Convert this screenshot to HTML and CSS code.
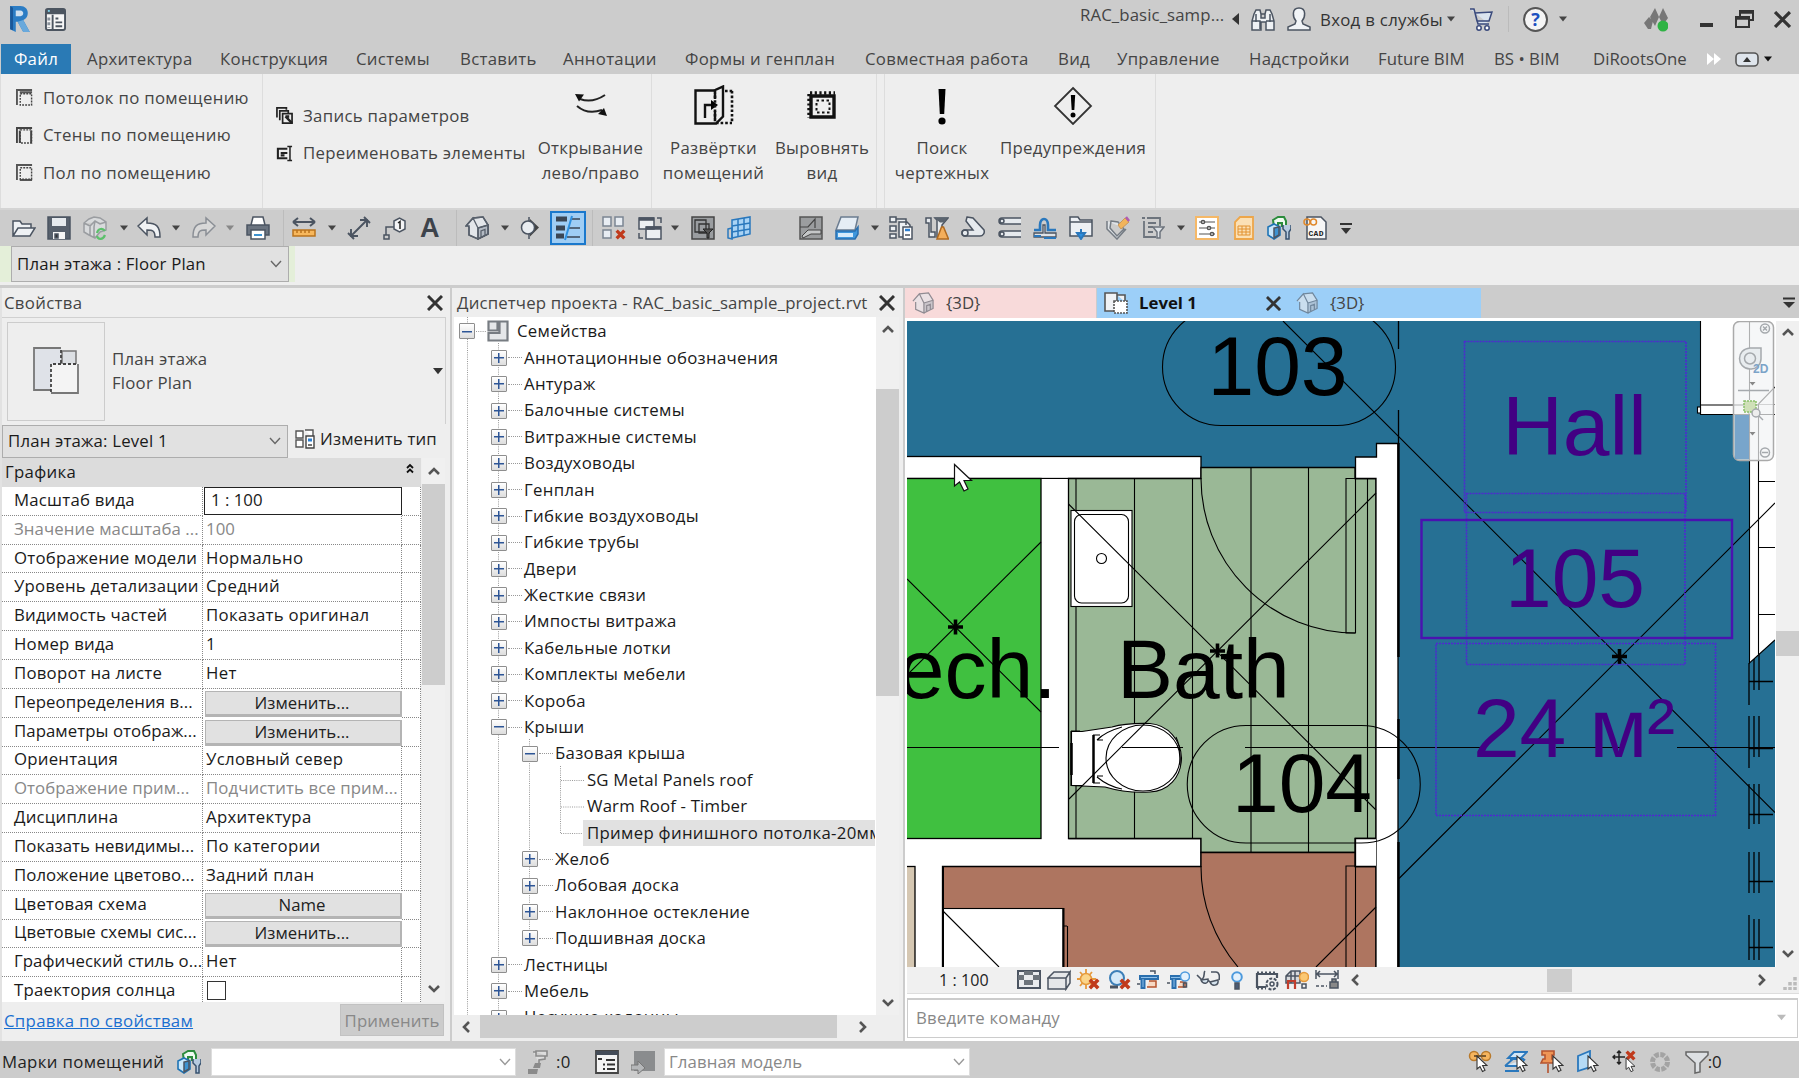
FILE: index.html
```html
<!DOCTYPE html>
<html lang="ru">
<head>
<meta charset="utf-8">
<title>RAC_basic_sample_project.rvt</title>
<link rel="stylesheet" href="styles.css">
</head>
<body>
<svg class="defs" aria-hidden="true">
  <symbol id="caret" viewBox="0 0 8 8"><path d="M0 1.5h8L4 6.5z" fill="currentColor"/></symbol>
  <symbol id="close" viewBox="0 0 16 16"><path d="M1 1l14 14M15 1L1 15" fill="none" stroke="#333" stroke-width="3"/></symbol>
  <symbol id="chev" viewBox="0 0 12 8"><path d="M1 1l5 5.5L11 1" fill="none" stroke="currentColor" stroke-width="1.4"/></symbol>
  <symbol id="arr" viewBox="0 0 12 8"><path d="M1 7l5-5 5 5" fill="none" stroke="#555" stroke-width="2.6"/></symbol>
  <symbol id="house" viewBox="0 0 24 24"><path d="M1 10L8 2l10-1 5 8v9l-10 5-9-4v-9z" fill="#e3e6ea"/><path d="M13 12l10-3v9l-10 5z" fill="#b3bac3"/><path d="M4 11v8l9 4V12M1 10l7-8 5 10M8 2l10-1 5 8-10 3M23 9v9l-10 5M16 21v-6l4-1.500v6" fill="none" stroke="#59616c" stroke-width="1.300"/></symbol>
  <symbol id="ptr" viewBox="0 0 12 18"><path d="M1 1v13l3-2.500 2.500 5 2.500-1.200L6.600 10.500H11z" fill="#fff" stroke="#333" stroke-width="1.100"/></symbol>
  <symbol id="redx" viewBox="0 0 10 10"><path d="M1.500 1.500l7 7M8.500 1.500l-7 7" stroke="#c03a1c" stroke-width="3" fill="none"/></symbol>
  <symbol id="cubes" viewBox="0 0 24 24"><path d="M6 4l5-3h6l2 4v5h-4V7h-4v4H7z" fill="#eefaf0" stroke="#2b8c3c" stroke-width="2"/><path d="M1 11l6-3 6 3v8l-6 4-6-4z" fill="#c9e7fa" stroke="#1f74b5" stroke-width="1.600"/><path d="M7 12v10l5-3v-8z" fill="#3d93d1"/><path d="M16 9v4l3 3v7h3v-7l2-3V9" fill="#b6cbe0" stroke="#37526f" stroke-width="1.500"/></symbol>
</svg>

<header class="titlebar">
  <svg class="logo" viewBox="0 0 22 30"><path d="M1 1h11c10 0 10 13 3 15l7 13h-7L9 18H7v11l-6-3z" fill="#2b7cc4"/><path d="M1 1l3 2v24l-3-1z" fill="#1a5798"/><path d="M7 6h5c4 0 4 6 0 6H7z" fill="#cfe0f0"/><path d="M9 18l6 11h7l-7-13z" fill="#69a9dc"/></svg>
  <svg class="panelico" viewBox="0 0 22 24"><rect x="1" y="1" width="20" height="22" rx="2" fill="#f7f7f7" stroke="#4c5560" stroke-width="2"/><path d="M1 4h20" stroke="#4c5560" stroke-width="5"/><path d="M4 10v11" stroke="#8a929b" stroke-width="3" stroke-dasharray="3 2"/><path d="M8 7v15M11 11h3M11 15h7M11 19h7" stroke="#4c5560" stroke-width="2" fill="none"/><path d="M3 3h2" stroke="#7fd0e8" stroke-width="2"/></svg>
  <span class="doc">RAC_basic_samp...</span>
  <svg class="backtri" viewBox="0 0 7 12"><path d="M7 0v12L0 6z" fill="#333"/></svg>
  <svg class="ic bino" viewBox="0 0 24 24"><path d="M3 6l2-4h4l1 4v4h4V6l1-4h4l2 4 2 7v9h-8v-8h-5v8H1v-9zM1 13h8v8M23 13h-8M10 6h4M5 6v8M19 6v8" fill="#eef1f4"/></svg>
  <svg class="ic user" viewBox="0 0 24 24"><path d="M12 1c-8 0-6 10-3 13l-1 3-7 3v3h22v-3l-7-3-1-3c3-3 5-13-3-13z" fill="#f1f4f7"/></svg>
  <span class="login">Вход в службы</span>
  <svg class="caret c1"><use href="#caret"/></svg>
  <svg class="ic cart" viewBox="0 0 24 24"><path d="M1 1h4l4 15h11M6 5l17-1-3 9H8z" fill="#dbe4ef" stroke="#3a4a7c"/><circle cx="10" cy="20" r="2.200" fill="#fff" stroke="#3a4a7c"/><circle cx="18" cy="20" r="2.200" fill="#fff" stroke="#3a4a7c"/></svg>
  <i class="vsep"></i>
  <span class="help">?</span>
  <svg class="caret c2"><use href="#caret"/></svg>
  <svg class="mount" viewBox="0 0 24 24"><path d="M5 9l4 4-2 8H4l-4-6zM11 0l4 9-4 9-5-9zM19 0l5 10-5 7-4-8z" fill="#777"/><circle cx="19" cy="18" r="5.500" fill="#2fb344"/></svg>
  <svg class="wbtn wmin" viewBox="0 0 13 20"><path d="M0 16h13" stroke="#333" stroke-width="4"/></svg>
  <svg class="wbtn wres" viewBox="0 0 19 20"><path d="M5 7V2h13v9h-4M1 18V8h13v10z" fill="none" stroke="#333" stroke-width="2"/><path d="M4 3h15M0 9h15" stroke="#333" stroke-width="3.500"/></svg>
  <svg class="wbtn wx"><use href="#close"/></svg>
</header>

<nav class="tabs">
  <a class="file">Файл</a><a>Архитектура</a><a>Конструкция</a><a>Системы</a><a>Вставить</a><a>Аннотации</a><a>Формы и генплан</a><a>Совместная работа</a><a>Вид</a><a>Управление</a><a>Надстройки</a><a class="lat">Future BIM</a><a class="lat">BS • BIM</a><a class="lat">DiRootsOne</a>
  <svg class="more" viewBox="0 0 14 14"><path d="M0 1l7 6-7 6zM7 1l7 6-7 6z" fill="#fff"/></svg>
  <svg class="collapse" viewBox="0 0 24 15"><rect x="1" y="1" width="22" height="13" rx="4" fill="#dfe5ec" stroke="#555" stroke-width="1.600"/><path d="M8 10h8l-4-5z" fill="#333"/></svg>
  <svg class="caret dark"><use href="#caret"/></svg>
</nav>

<section class="ribbon">
  <div class="rgroup g1">
    <div class="small"><svg class="sq" viewBox="0 0 18 18"><path d="M1 17V1h16M4 3.500h13" fill="none" stroke="#555" stroke-width="2"/><rect x="4.500" y="5" width="12" height="12" fill="none" stroke="#444" stroke-width="1.500" stroke-dasharray="2 1.200"/></svg>Потолок по помещению</div>
    <div class="small"><svg class="sq" viewBox="0 0 18 18"><path d="M1 17V1h16M4 17V4M16 4v13" fill="none" stroke="#444" stroke-width="2"/><rect x="4.500" y="3" width="12" height="14" fill="none" stroke="#444" stroke-width="1.500" stroke-dasharray="2 1.200"/></svg>Стены по помещению</div>
    <div class="small"><svg class="sq" viewBox="0 0 18 18"><path d="M1 17V1h16M4 17h13" fill="none" stroke="#555" stroke-width="2"/><rect x="4.500" y="4" width="12" height="12" fill="none" stroke="#444" stroke-width="1.500" stroke-dasharray="2 1.200"/></svg>Пол по помещению</div>
  </div>
  <div class="rgroup g2">
    <div class="small"><svg class="sq" viewBox="0 0 18 18"><path d="M1 11V1h10v2M4 14V4h9v2M7 17V7h10v10z" fill="none" stroke="#222" stroke-width="1.800"/><path d="M10 10l7 7M10 10h4" stroke="#222" stroke-width="2.500"/></svg>Запись параметров</div>
    <div class="small"><svg class="sq" viewBox="0 0 18 18"><path d="M12 4H2v10h10M5 8.500h7M5 11h4" fill="none" stroke="#222" stroke-width="2.200"/><path d="M12 1.500h5M14.800 1v16M12 16.500h5" fill="none" stroke="#222" stroke-width="1.600"/></svg>Переименовать элементы</div>
  </div>
  <div class="big b1"><svg viewBox="0 0 40 40"><path d="M9 14c8 3 16 2 25-4M6 21c8 7 16 7 25 4" fill="none" stroke="#222" stroke-width="2"/><path d="M4 9l9 .500-5 7zM36 31l-9-2 6-6z" fill="#111"/></svg><span>Открывание<br>лево/право</span></div>
  <div class="big b2"><svg viewBox="0 0 40 40"><path d="M1.500 5.500H20l9-4v30l-7 7H1.500zM21 8v6M21 26v8M11 33V20h8" fill="none" stroke="#111" stroke-width="2.400"/><path d="M17 15l7 5-7 5z"/><path d="M31 6h8M38 6v32M21 6v32M22 38h16" fill="none" stroke="#111" stroke-width="2.600" stroke-dasharray="2.600 2"/></svg><span>Развёртки<br>помещений</span></div>
  <div class="big b3"><svg viewBox="0 0 40 40"><path d="M9 11h23v21H9z" fill="none" stroke="#111" stroke-width="3.400"/><path d="M8 8h25M7 9v24" stroke="#111" stroke-width="3.400" fill="none" stroke-dasharray="2.200 2.500"/><path d="M14.500 15.500h13v12h-13z" fill="none" stroke="#111" stroke-width="2" stroke-dasharray="2.500 2.500"/></svg><span>Выровнять<br>вид</span></div>
  <i class="rs"></i>
  <div class="big b4"><svg viewBox="0 0 40 40"><path d="M16.500 4h7l-1.300 25h-4.400z"/><circle cx="20" cy="36" r="3.600"/></svg><span>Поиск<br>чертежных</span></div>
  <div class="big b5"><svg viewBox="0 0 40 40"><path d="M20 3l18 18-18 18L2 21z" fill="none" stroke="#333" stroke-width="1.800"/><path d="M17.800 10h4.400l-.900 15h-2.600z"/><circle cx="20" cy="30" r="2.500"/></svg><span>Предупреждения</span></div>
</section>

<div class="qat">
  <svg class="ic" viewBox="0 0 24 24"><path d="M1 20V5h7l2 3h9v4M1 20l5-8h17l-5 8z" fill="#eef1f4"/></svg>
  <svg class="ic" viewBox="0 0 24 24"><path d="M1 1h22v22H1z" fill="#57606c"/><path d="M5 2h14v8H5z" fill="#e6eaee" stroke="none"/><path d="M6 16h12v7H6z" fill="#f5f5f5" stroke="none"/><path d="M8 18h3v4H8z" fill="#333"/></svg>
  <svg class="ic" viewBox="0 0 24 24"><path d="M1 7l5-4 5-2 6 1 6 4v8l-6 2-5 6-6-3-5-3zM1 7l6 3 5-5 5 3 6-2M7 10v10M12 5l-1 6v10" fill="#d8dadc" stroke="#9a9da1"/><path d="M14 17c1-5 6-5 8-2M22 19c-2 5-7 5-8 1" stroke="#5cc06c" stroke-width="2.200"/></svg>
  <svg class="caret"><use href="#caret"/></svg>
  <svg class="ic" viewBox="0 0 24 24"><path d="M1 10l9-8v5c9 0 13 3 13 14h-5c0-6-2-7-8-7v5z" fill="#f0f2f4"/></svg>
  <svg class="caret"><use href="#caret"/></svg>
  <svg class="ic dim" viewBox="0 0 24 24"><path d="M23 10l-9-8v5C5 7 1 10 1 21h5c0-6 2-7 8-7v5z" fill="#e4e4e4"/></svg>
  <svg class="caret dim"><use href="#caret"/></svg>
  <svg class="ic" viewBox="0 0 24 24"><path d="M5 9l2-8h10l2 8" fill="#fff"/><path d="M1 9h22v10H1z" fill="#6b7480"/><path d="M5 14h14v9H5z" fill="#fff"/><path d="M8 19h8" stroke="#3d93d1" stroke-width="2"/></svg>
  <i class="vs"></i>
  <svg class="ic" viewBox="0 0 24 24"><path d="M1 6h22M1 6l5-4M1 6l5 4M23 6l-5-4M23 6l-5 4" stroke-width="2"/><path d="M1 14h22v6H1z" fill="#f7b75c" stroke="#b9731d"/><path d="M5 14v3M9 14v3M13 14v3M17 14v3" stroke="#b9731d"/></svg>
  <svg class="caret"><use href="#caret"/></svg>
  <svg class="ic" viewBox="0 0 24 24"><path d="M5 19L19 5M4 13v7h7M13 4h7v7M17 1l6 6M1 17l6 6" stroke-width="1.900"/></svg>
  <svg class="ic" viewBox="0 0 24 24"><path d="M3 19v-8h8M1 19h5v4H1z"/><path d="M11 5l5.500-3L22 5v8l-5.500 3L11 13z" fill="#f3f4f6"/><path d="M15 7l2-1.500V13" stroke="#222"/></svg>
  <b class="letter">A</b>
  <i class="vs"></i>
  <svg class="ic"><use href="#house"/></svg>
  <svg class="caret"><use href="#caret"/></svg>
  <svg class="ic" viewBox="0 0 24 24"><path d="M12 3l9 8.500-9 9z" fill="#444" stroke="none"/><path d="M11 1v4M11 18v5"/><circle cx="10" cy="11.500" r="6.500" fill="#e9edf1"/></svg>
  <span class="active"><svg class="ic" viewBox="0 0 26 26"><path d="M1 4h11M1 13h9M1 21h8" stroke="#3b4654" stroke-width="5"/><path d="M16 4h9M14 13h11M12 22h13" stroke="#3b4654"/><path d="M17 1l-7 24" stroke="#2d90e0" stroke-width="2"/></svg></span>
  <i class="vs"></i>
  <svg class="ic" viewBox="0 0 24 24"><path d="M1 1h8v9H1zM13 1h8v9h-8zM1 14h8v8H1z" fill="#e8edf3" stroke="#7b8592"/><use href="#redx" x="13" y="13" width="11" height="11"/></svg>
  <svg class="ic" viewBox="0 0 24 24"><path d="M1 2h15v11H1zM8 11h15v12H8z" fill="#eceff2"/><path d="M1 3h15M8 12h15" stroke-width="3.500"/><path d="M19 2h4v5M1 17v5h4"/></svg>
  <svg class="caret"><use href="#caret"/></svg>
  <svg class="ic" viewBox="0 0 24 24"><path d="M1 1h22v22H1z" fill="#9a9da0" stroke="#444"/><path d="M4 4h11v12H4zM8 8h10v9H8z" stroke="#333" stroke-width="1.300"/><path d="M12 13h10l-4 4v5h-2v-5z" fill="#555" stroke="#222" stroke-width="1"/></svg>
  <svg class="ic" viewBox="0 0 24 24"><path d="M5 4l18-3v17L5 22z" fill="#a9d3f5" stroke="#2a78bd"/><path d="M1 13l4-1v11l-4-1zM11 3v18M17 2v18M5 10l18-3M5 16l18-3" stroke="#2a78bd"/></svg>
  <svg class="ic" viewBox="0 0 24 24"><path d="M1 1h22v22H1z" fill="#9b9d9f" stroke="#555"/><path d="M3 20l6-6h13v4H12l-8 4z" fill="#c5c7c8" stroke="#444" stroke-width="1"/><path d="M1 11h8l7-8v9" stroke="#444" stroke-width="1.200"/></svg>
  <svg class="ic" viewBox="0 0 24 24"><path d="M6 1h17l-3 13H1z" fill="#e5edf5" stroke="#6b7c90"/><path d="M1 15h19l3-4v7l-3 5H1z" fill="#3f97dc" stroke="#2a6fae"/><path d="M3 17h15v4H3z" fill="#d6ebfb" stroke="none"/></svg>
  <svg class="caret"><use href="#caret"/></svg>
  <svg class="ic" viewBox="0 0 24 24"><path d="M1 1h6v5H1zM1 10h6v5H1zM1 18h6v4H1zM7 3h10v6M10 6h8l3 3v12H10z" fill="#edf0f3"/><path d="M14 11h9v12h-9z" fill="#fff"/><path d="M16 14h5" stroke="#2d7fd0" stroke-width="2.500"/><path d="M16 19h5"/></svg>
  <svg class="ic" viewBox="0 0 24 24"><path d="M1 2h5v14h4v5H4V7H1zM10 2h13l-6 7v12h-5V4z" fill="#e6eaee"/><path d="M9 1.500h14l-4 5h-4z" fill="#5b646f" stroke="none"/><path d="M16.500 11h2l5 12H12z" fill="#f4ae5b" stroke="#b06a20"/></svg>
  <svg class="ic" viewBox="0 0 24 24"><path d="M6 1l6 1 11 12c1 3-1 6-4 6H4c-4 0-4-6 0-6h8L5 5z" fill="#e6eaee"/><circle cx="4" cy="17" r="3"/></svg>
  <svg class="ic" viewBox="0 0 24 24"><path d="M23 2H4c-4 0-4 6 0 6h19M23 15H4c-4 0-4 6 0 6h19" fill="#e6eaee"/><circle cx="4" cy="5" r="2"/><circle cx="4" cy="18" r="2"/></svg>
  <svg class="ic" viewBox="0 0 24 24"><path d="M1 14h6V9c0-8 8-8 8 0v5h8" stroke="#2a78bd" stroke-width="2.600"/><path d="M1 21h22v-4H12V9H10v8H1z" fill="#dfe3e7" stroke-width="1.300"/><path d="M1 20h7M11 22h12" stroke="#2a78bd" stroke-width="2"/></svg>
  <svg class="ic" viewBox="0 0 24 24"><path d="M1 20V1h8l2 3h12v16z" fill="#edf0f4"/><path d="M1 6h22"/><path d="M12 13v5M8 17h8l-4 6z" stroke="#2a78bd" fill="#2d90e0" stroke-width="2"/></svg>
  <svg class="ic" viewBox="0 0 24 24"><path d="M1 5v8l10 10 9-10M5 5l7 1 6 7-7 7L4 12z" fill="#dfe3e7" stroke="#747b83"/><path d="M12 9l7-7 4 4-8 7z" fill="#f2b45b" stroke="#c9985c" stroke-width="1"/><path d="M20 1l3 4" stroke="#b05bb0" stroke-width="2.500"/></svg>
  <svg class="ic" viewBox="0 0 24 24"><path d="M1 2h3M6 2h13v8M3 5v16h12M7 7h8M7 11h5M7 16h5" stroke="#6d747d" stroke-width="1.800"/><path d="M12 11h11l-4 5v6h-3v-6z" fill="#dde1e5" stroke="#6d747d"/></svg>
  <svg class="caret"><use href="#caret"/></svg>
  <svg class="ic" viewBox="0 0 24 24"><path d="M1 1h22v22H1z" fill="#fff" stroke="#f5b867" stroke-width="2"/><path d="M4 6h16M4 12h16M4 18h16" stroke="#555" stroke-width="1.200"/><circle cx="8" cy="6" r="1.600" fill="#fff" stroke="#555"/><circle cx="14" cy="12" r="1.600" fill="#fff" stroke="#555"/><circle cx="17" cy="18" r="1.600" fill="#fff" stroke="#555"/></svg>
  <svg class="ic" viewBox="0 0 24 24"><path d="M8 1h13v22H3V6z" fill="#fbe0b5" stroke="#eda64a" stroke-width="1.800"/><path d="M6 10h12v9H6zM6 13h12M6 16h12M10 10v9M14 10v9" stroke="#e29230" stroke-width="1"/></svg>
  <svg class="ic"><use href="#cubes"/></svg>
  <svg class="ic" viewBox="0 0 24 24"><path d="M4 1h14l5 5v17H4z" fill="#f6f6f6"/><circle cx="4" cy="6" r="3" stroke="#e0892c"/><circle cx="10.500" cy="6" r="3" stroke="#e0892c"/><text x="5.500" y="20" class="cad">CAD</text></svg>
  <svg class="menu" viewBox="0 0 12 12"><path d="M0 2h12" stroke="#333" stroke-width="2"/><path d="M1 6h10l-5 6z" fill="#333"/></svg>
</div>

<div class="options"><div class="greenish"><div class="combo">План этажа : Floor Plan<svg class="chev"><use href="#chev"/></svg></div></div></div>

<main class="work">
  <aside class="props">
    <div class="ptitle">Свойства<svg class="x"><use href="#close"/></svg></div>
    <div class="typesel">
      <div class="preview"><svg viewBox="0 0 46 48"><path d="M29 4h14v15H29z" fill="#dcdfe3" stroke="#777" stroke-width="1.500"/><path d="M1 1h27v16H18v26H1z" fill="#dfe2e8"/><path d="M18 17h27v29H18z" fill="#f4f4f4"/><path d="M28 1H1v42h17M45 17v29H18" fill="none" stroke="#777" stroke-width="1.800"/><path d="M28 3v14M18 45V17h27" fill="none" stroke="#444" stroke-width="1.800" stroke-dasharray="3 2"/></svg></div>
      <div class="tname">План этажа<br>Floor Plan</div>
      <svg class="tcaret"><use href="#caret"/></svg>
    </div>
    <div class="instance">
      <div class="combo">План этажа: Level 1<svg class="chev"><use href="#chev"/></svg></div>
      <svg class="edit" viewBox="0 0 20 20"><path d="M1 2h7v7H1zM10 1h8v8M1 11h7v7H1z" fill="#fff" stroke="#555" stroke-width="1.400"/><path d="M11 7h8v12h-8z" fill="#fff" stroke="#444" stroke-width="1.400"/><path d="M13 11h4" stroke="#2d7fd0" stroke-width="3"/><path d="M13 16h4" stroke="#444" stroke-width="1.500"/></svg>
      <span>Изменить тип</span>
    </div>
    <div class="gridwrap">
      <div class="grid">
        <div class="ghead">Графика<svg viewBox="0 0 8 10"><path d="M1 4.500L4 1.500l3 3M1 9l3-3 3 3" fill="none" stroke="#111" stroke-width="1.800"/></svg></div>
        <div class="pr"><span>Масштаб вида</span><span class="edt">1 : 100</span><i></i></div>
        <div class="pr off"><span>Значение масштаба ...</span><span>100</span><i></i></div>
        <div class="pr"><span>Отображение модели</span><span>Нормально</span><i></i></div>
        <div class="pr"><span>Уровень детализации</span><span>Средний</span><i></i></div>
        <div class="pr"><span>Видимость частей</span><span>Показать оригинал</span><i></i></div>
        <div class="pr"><span>Номер вида</span><span>1</span><i></i></div>
        <div class="pr"><span>Поворот на листе</span><span>Нет</span><i></i></div>
        <div class="pr tight"><span>Переопределения в...</span><button>Изменить...</button><i></i></div>
        <div class="pr tight"><span>Параметры отображ...</span><button>Изменить...</button><i></i></div>
        <div class="pr"><span>Ориентация</span><span>Условный север</span><i></i></div>
        <div class="pr off tight"><span>Отображение прим...</span><span>Подчистить все прим...</span><i></i></div>
        <div class="pr"><span>Дисциплина</span><span>Архитектура</span><i></i></div>
        <div class="pr tight"><span>Показать невидимы...</span><span>По категории</span><i></i></div>
        <div class="pr tight"><span>Положение цветово...</span><span>Задний план</span><i></i></div>
        <div class="pr"><span>Цветовая схема</span><button>Name</button><i></i></div>
        <div class="pr tight"><span>Цветовые схемы сис...</span><button>Изменить...</button><i></i></div>
        <div class="pr tight"><span>Графический стиль о...</span><span>Нет</span><i></i></div>
        <div class="pr"><span>Траектория солнца</span><span><b class="check"></b></span><i></i></div>
      </div>
      <div class="vscroll pv"><svg class="up"><use href="#arr"/></svg><i class="thumb"></i><svg class="down"><use href="#arr"/></svg></div>
    </div>
    <div class="pfoot"><a>Справка по свойствам</a><span class="apply">Применить</span></div>
  </aside>

  <aside class="browser">
    <div class="ptitle">Диспетчер проекта - RAC_basic_sample_project.rvt<svg class="x"><use href="#close"/></svg></div>
    <div class="treewrap">
      <div class="tree">
        <svg class="guides" viewBox="454 317 422 698"><path d="M467.500 317V1015M498.500 343V1015M529.500 739V939M560.500 766V833.500M476 331.500h10M561 780.500h23M561 807h23M561 833.500h23"/></svg>
        <div class="tr l0"><b class="m"></b><svg class="fam" viewBox="0 0 22 22"><path d="M1.500 1.500h9v9h-9zM1.500 13h11V1.500h8v19h-19z" fill="#e5e7e9" stroke="#777c82" stroke-width="2.200"/></svg>Семейства</div>
        <div class="tr l1"><b></b>Аннотационные обозначения</div>
        <div class="tr l1"><b></b>Антураж</div>
        <div class="tr l1"><b></b>Балочные системы</div>
        <div class="tr l1"><b></b>Витражные системы</div>
        <div class="tr l1"><b></b>Воздуховоды</div>
        <div class="tr l1"><b></b>Генплан</div>
        <div class="tr l1"><b></b>Гибкие воздуховоды</div>
        <div class="tr l1"><b></b>Гибкие трубы</div>
        <div class="tr l1"><b></b>Двери</div>
        <div class="tr l1"><b></b>Жесткие связи</div>
        <div class="tr l1"><b></b>Импосты витража</div>
        <div class="tr l1"><b></b>Кабельные лотки</div>
        <div class="tr l1"><b></b>Комплекты мебели</div>
        <div class="tr l1"><b></b>Короба</div>
        <div class="tr l1"><b class="m"></b>Крыши</div>
        <div class="tr l2"><b class="m"></b>Базовая крыша</div>
        <div class="tr l3"><span>SG Metal Panels roof</span></div>
        <div class="tr l3"><span>Warm Roof - Timber</span></div>
        <div class="tr l3"><span class="sel">Пример финишного потолка-20мм</span></div>
        <div class="tr l2"><b></b>Желоб</div>
        <div class="tr l2"><b></b>Лобовая доска</div>
        <div class="tr l2"><b></b>Наклонное остекление</div>
        <div class="tr l2"><b></b>Подшивная доска</div>
        <div class="tr l1"><b></b>Лестницы</div>
        <div class="tr l1"><b></b>Мебель</div>
        <div class="tr l1"><b></b>Несущие колонны</div>
      </div>
      <div class="vscroll bv"><svg class="up"><use href="#arr"/></svg><i class="thumb"></i><svg class="down"><use href="#arr"/></svg></div>
    </div>
    <div class="hscroll"><svg class="left"><use href="#arr"/></svg><i class="thumb"></i><svg class="right"><use href="#arr"/></svg></div>
  </aside>

  <section class="views">
    <div class="vtabs">
      <div class="vt pink"><svg class="vico faded"><use href="#house"/></svg><span>{3D}</span></div>
      <div class="vt cur"><svg class="vico" viewBox="0 0 24 22"><path d="M1 1h12v18H1zM13 3h8v7" fill="#f0f2f5" stroke="#555" stroke-width="1.600"/><path d="M10 9h13v12H10z" fill="#fff" stroke="#555" stroke-width="1.600" stroke-dasharray="2 1"/></svg><span>Level 1</span><svg class="x"><use href="#close"/></svg></div>
      <div class="vt last"><svg class="vico faded"><use href="#house"/></svg><span>{3D}</span></div>
      <svg class="menu" viewBox="0 0 12 12"><path d="M0 1.500h12" stroke="#333" stroke-width="2"/><path d="M0 5h12l-6 6z" fill="#333"/></svg>
    </div>
    <div class="canvasrow">
      <svg class="plan" viewBox="907 321 868 646">
        <rect x="907" y="321" width="868" height="646" fill="#267094"/>
        <g stroke="#000" stroke-width="1.300">
          <rect x="900" y="456.500" width="301" height="22" fill="#fff"/>
          <path d="M900 838.500H1201v28H942V967H915V866.500H900z" fill="#fff" stroke="none"/>
          <path d="M1068.500 838.500H1201V866.500" fill="none"/>
          <rect x="900" y="866.500" width="15" height="110" fill="#d5c7b2"/>
          <rect x="1041" y="479" width="28" height="360" fill="#fff" stroke="none"/>
          <rect x="900" y="478.500" width="141" height="360" fill="#40c040"/>
          <path d="M1068.500 478.500H1201V467.500H1355V478.500H1376V838.500H1355V852.500H1201V838.500H1068.500z" fill="#9ab896"/>
          <path d="M942.500 866.500H1201V852.500H1355V866.500H1376V980H942.500z" fill="#ae7560"/>
          <path d="M1355.500 478.500v-21.500h21V443.500h21.500V980h-22V478.500z" fill="#fff"/>
          <path d="M1376 838.500h-20.500v28H1376" fill="#fff"/>
        </g>
        <g stroke="#000" stroke-width="1.100">
          <path d="M1700.500 315H1780V405H1749V414.500H1700.500z" fill="#fff"/>
          <path d="M1749.500 405H1780V635L1749.500 663z" fill="#fff" stroke="none"/>
          <path d="M1700 405H1758M1749.500 315V400M1749.500 414V663L1775 640M1758.500 404V654M1758.500 404L1775 387M1758 414.500H1775M1758 481.500H1775M1758 547.500H1775M1758 614.500H1775" fill="none"/>
          <rect x="1697.500" y="407" width="3" height="6" fill="#fff"/>
          <path d="M1749 663V705M1754 659V690M1759 654V690M1749 681.500H1773M1749 716V768M1754 716V757M1759 716V757M1749 748.500H1773M1749 784V829M1754 784V824M1759 784V824M1749 814.500H1773M1749 852V893M1754 852V893M1759 852V893M1749 881.500H1773M1749 915V960M1754 919V960M1759 919V960M1749 947.500H1773" stroke-width="1.300"/>
        </g>
        <g fill="none" stroke="#000" stroke-width="1.100">
          <path d="M1076 478V838M1134.500 478V838M1192.500 478V838M1251 467V852M1308.500 467V852M1367.500 478V838M1355.500 478V633H1346V478.500H1355M1346 980V866H1355.500V980"/>
          <path d="M1201 478A154.500 154.500 0 0 0 1355 633M1201 866A154.500 154.500 0 0 0 1238 967"/>
          <rect x="1071" y="510.500" width="61" height="96" fill="#fff"/>
          <rect x="1074.500" y="514.500" width="54" height="88.500" rx="7"/>
          <circle cx="1101.500" cy="558.500" r="5"/>
          <path d="M1071 731.500H1082L1112 727C1122 724 1132 723 1150 723.500 1168 725 1181 740 1181.500 758 1181 778 1168 791 1150 792 1132 793 1115 790 1105 787L1071 785.500z" fill="#fff"/>
          <path d="M1080 731H1071.500V785.500H1082M1093 735H1100M1093 783H1100M1097 740H1103M1097 776H1103M1097 740C1103 734 1111 730 1122 727M1097 777C1103 782 1111 787 1122 789"/>
          <path d="M1093.500 735V783M1071.500 743V775" stroke-width="2.500"/>
          <ellipse cx="1143" cy="758" rx="37" ry="33"/>
          <path d="M1176 737Q1181 747 1180 765"/>
          <rect x="943" y="908.500" width="120" height="70" fill="#fff"/>
          <path d="M943 911l56 56M1067.500 926V980M1064 926h3"/>
          <path d="M943 866V980M1063.500 908V980" stroke-width="2"/>
          <path d="M907 579L1041 712M1041 542L907 675M1068.500 504L1376 810M1376 493L1069 799M1283 321L1775 812.500M1775 503L1399 878.500M1376 907L1316 967"/>
          <path d="M907 747.500H1059M1122 747.500H1183M1245 747.500H1480M1556 747.500H1620M1677 747.500H1775"/>
          <path d="M1221 308.500H1337A58.500 58.500 0 0 1 1337 425.500H1221A58.500 58.500 0 0 1 1221 308.500z"/>
          <path d="M1246 725.500H1361.500A58.500 58.500 0 0 1 1361.500 843H1246A58.500 58.500 0 0 1 1246 725.500z"/>
          <path d="M1398.500 321V349M1398.500 410V444" stroke-width="1.300"/>
          <path d="M1398.500 443V657M1398.500 719V779M1398.500 842V967" stroke-width="2.400"/>
        </g>
        <g stroke="#000" stroke-width="3.600"><path d="M948 627h15M955.500 619.500v15M1210 651h15M1217.500 643.500v14M1612 656.500h15M1619.500 649v15"/></g>
        <g class="ptext">
          <text x="1277.500" y="395" text-anchor="middle">103</text>
          <text x="1302" y="812" text-anchor="middle">104</text>
          <text x="1117" y="698">Bath</text>
          <text x="1056.500" y="698" text-anchor="end">ech.</text>
          <g fill="#420083"><text x="1574.500" y="454.500" text-anchor="middle">Hall</text><text x="1575" y="607" text-anchor="middle">105</text><text x="1473" y="757" textLength="202">24 м²</text></g>
        </g>
        <g fill="none" stroke="#4f28d0" stroke-width="1.600" stroke-dasharray="2 1">
          <rect x="1464.500" y="341.500" width="221.500" height="171"/><rect x="1466.500" y="493.500" width="218.500" height="171"/><rect x="1436" y="643.500" width="279.500" height="172"/>
        </g>
        <rect x="1421.500" y="520" width="310.500" height="118" fill="none" stroke="#4a12b0" stroke-width="2.400"/>
        <rect x="1733.500" y="321.500" width="40" height="139" rx="6" fill="#f2f4f5" fill-opacity=".72" stroke="#aaa" stroke-width="1.500"/>
        <rect x="1735" y="415" width="14" height="44" fill="#5c93c4" opacity=".7"/>
        <g fill="none" stroke="#a5a9ad" stroke-width="1.500">
          <circle cx="1765" cy="328.500" r="4.500"/><path d="M1763 326.500l4 4M1767 326.500l-4 4M1738 390.500h31"/>
          <path d="M1750 348h11v11c0 5-5 11-11 10-14-1-14-20 0-21z" fill="#e8ecef"/><circle cx="1750" cy="358.500" r="5.500"/>
          <circle cx="1765" cy="452.500" r="4.500"/><path d="M1762 452.500h6"/>
          <path d="M1744 401h12v11h-12z" fill="#cfe0b8" stroke="#8bc06a" stroke-dasharray="2 1"/>
          <circle cx="1756" cy="413" r="4" fill="#eee"/><path d="M1759 416l4 4"/>
        </g>
        <path d="M1749.500 382h6l-3 3.500zM1749.500 432h6l-3 3.500z" fill="#888"/>
        <text x="1753" y="373" class="two">2D</text>
        <path d="M954.500 464.500V486l5-4 4.500 9 4-2-4-8.500h7.500z" fill="#fff" stroke="#111" stroke-width="1.200"/>
      </svg>
      <div class="vscroll cv"><svg class="up"><use href="#arr"/></svg><i class="thumb"></i><svg class="down"><use href="#arr"/></svg></div>
    </div>
    <div class="vbar">
      <span class="scale">1 : 100</span>
      <svg class="ic" viewBox="0 0 24 22"><path d="M1 2h22v17H1z" fill="#e9ebed" stroke-width="2"/><path d="M1 6h6v5H1zM16 6h7v5h-7zM7 11h9v5H7zM7 2h9v4H7z" fill="#6c737a" stroke="none"/></svg>
      <svg class="ic" viewBox="0 0 24 22"><path d="M1 9l6-6h16l-4 6zM1 9h18v11H1zM19 9l4-6v11l-4 6z" fill="#e5e7e9"/></svg>
      <svg class="ic" viewBox="0 0 24 22"><path d="M10 0v20M1 10h19M4 3l12 13M16 3L4 17" stroke="#e69a3c" stroke-width="1.800"/><circle cx="10" cy="10" r="5.500" fill="#fbd58a" stroke="#e69a3c"/><use href="#redx" x="12" y="9" width="12" height="12"/></svg>
      <svg class="ic" viewBox="0 0 24 22"><circle cx="10" cy="9" r="7" fill="#d5e9f8" stroke="#3d7fb8" stroke-width="2"/><path d="M3 18h8" stroke-width="3"/><use href="#redx" x="12" y="9" width="12" height="12"/></svg>
      <svg class="ic" viewBox="0 0 24 22"><path d="M13 12h7v6h-9" fill="#f7d9c4" stroke="#b5532e"/><path d="M3 8.500h20M7 8v12" stroke="#2a6fae" stroke-width="5"/><path d="M5 8.500h16M7 10v8" stroke="#8fc1ea" stroke-width="1"/><path d="M14 2h5v3M1 15h3"/></svg>
      <svg class="ic" viewBox="0 0 24 22"><path d="M14 13h5v5h-7" fill="#f7d9c4" stroke="#b5532e"/><path d="M4 8.500h12M8 8v12" stroke="#2a6fae" stroke-width="5"/><path d="M5 8.500h9M8 10v8" stroke="#8fc1ea" stroke-width="1"/><path d="M1 14h3"/><circle cx="19" cy="7.500" r="4.500" fill="#e4f1fc" stroke="#4d9add"/><path d="M17.500 14h3v4h-3z"/></svg>
      <svg class="ic" viewBox="0 0 24 22"><path d="M1 6l5 5M9 2c-2 2 1 3-3 9M15 3h5c3 0 4 4 3 8" stroke-width="1.600"/><path d="M5 11l7-1c1 5-5 6-7 1zM14 13l8-2c1 6-6 7-8 2zM12 11l2 2" fill="#d6e4ee"/></svg>
      <svg class="ic" viewBox="0 0 24 22"><circle cx="12" cy="8" r="4.800" fill="#e4f1fc" stroke="#4d9add" stroke-width="2"/><path d="M10 14h4v6h-4z" fill="#4b5b75"/></svg>
      <svg class="ic" viewBox="0 0 24 22"><path d="M11 18H2V5h20v4" stroke-width="2.200"/><path d="M2 4h20M2 19h9" stroke-width="3" stroke-dasharray="2 2"/><circle cx="17" cy="15" r="5.500" stroke-width="2" stroke-dasharray="3 1.500"/><circle cx="17" cy="15" r="2"/></svg>
      <svg class="ic" viewBox="0 0 24 22"><path d="M1 7l5-5h9v12H1zM1 7h14M6 2v12M10 2v12" fill="#d8dadc"/><path d="M3 20v-8h7v8" stroke="#c23d2c" stroke-width="2.200"/><circle cx="19" cy="8" r="4.500" fill="#fbc873" stroke="#e69a3c"/><path d="M17 15h4v4h-4z"/></svg>
      <svg class="ic" viewBox="0 0 24 22"><path d="M1 1v9M23 1v9M1 5h22M5 2L2 5l3 3M19 2l3 3-3 3"/><path d="M1 17h11" stroke-dasharray="3 2"/><path d="M15 13h8v6h-8zM17 13v-3h4v3" fill="#888"/></svg>
      <svg class="left"><use href="#arr"/></svg><i class="thumb"></i><svg class="right"><use href="#arr"/></svg>
      <svg class="grip" viewBox="0 0 14 14"><path d="M12 1v13M7 6v8M2 11v3" stroke="#bbb" stroke-width="3.500" stroke-dasharray="3.500 1.500"/></svg>
    </div>
    <div class="cmd"><span>Введите команду</span><svg class="caret"><use href="#caret"/></svg></div>
  </section>
</main>

<footer class="status">
  <span class="hint">Марки помещений</span>
  <svg class="ic cub"><use href="#cubes"/></svg>
  <div class="sbox s1"><svg class="chev"><use href="#chev"/></svg></div>
  <svg class="brush" viewBox="0 0 22 24"><path d="M6 2h3V1h11v5h-2v3l-6 1v3M9 2v4h11" fill="#ddd" stroke="#8a8a8a" stroke-width="1.600"/><path d="M8 13h6l-1 5H6zM1 19h10l-1 5H1z" fill="#8a8a8a"/></svg>
  <span class="zero">:0</span>
  <svg class="list" viewBox="0 0 24 24"><path d="M1 1h22v22H1z" fill="#f4f4f4" stroke="#444" stroke-width="1.800"/><path d="M1 3h22" stroke="#444c58" stroke-width="4"/><path d="M3 9h4M11 10h9M8 14.500h2M12 14.500h8M8 19h2M12 19h8" stroke="#333" stroke-width="2.200" fill="none"/></svg>
  <svg class="link" viewBox="0 0 24 24"><path d="M3 1h21v20H3z" fill="#8a8c8e"/><path d="M0 15h7v-4l7 7-7 6v-4H0z" fill="#b5b7b9" stroke="#777"/></svg>
  <div class="sbox s2"><span>Главная модель</span><svg class="chev"><use href="#chev"/></svg></div>
  <div class="sel-icons">
    <svg class="ic" viewBox="0 0 24 24"><circle cx="6" cy="6" r="4.500" fill="#f5b45d" stroke="#b97a2c"/><circle cx="18" cy="6" r="4.500" fill="#f5b45d" stroke="#b97a2c"/><path d="M6 6h12" stroke="#7e5a2c" stroke-width="2"/><use href="#ptr" x="8" y="5" width="12" height="18"/></svg>
    <svg class="ic" viewBox="0 0 24 24"><path d="M10 2h13l-6 6H4zM6 9h14M1 16h14l6-7M1 21h14M1 16l9-8" fill="#d5e8f7" stroke="#2a78bd" stroke-width="1.800"/><use href="#ptr" x="12" y="5" width="12" height="18"/></svg>
    <svg class="ic" viewBox="0 0 24 24"><path d="M2 1h12v4h-2v4h2l2 4H1l2-4h2V5H2zM8 14v9" fill="#ee9455" stroke="#b5532e" stroke-width="1.600"/><use href="#ptr" x="12" y="5" width="12" height="18"/></svg>
    <svg class="ic" viewBox="0 0 24 24"><path d="M2 6l12-5v16L2 21z" fill="#b5daf5" stroke="#2a78bd" stroke-width="1.800"/><use href="#ptr" x="11" y="5" width="12" height="18"/></svg>
    <svg class="ic" viewBox="0 0 24 24"><path d="M7 1v13M1 7h12M5 3l2-2 2 2M5 12l2 2 2-2M3 5L1 7l2 2" stroke="#222"/><use href="#redx" x="13" y="0" width="11" height="11"/><use href="#ptr" x="13" y="7" width="11" height="16"/></svg>
    <svg class="ic" viewBox="0 0 24 24"><circle cx="12" cy="12" r="7.500" stroke="#a3a3a3" stroke-width="5" stroke-dasharray="4.500 1.400"/></svg>
    <svg class="ic" viewBox="0 0 24 24"><path d="M1 2h22v3l-8 8v9l-5 1V13L1 5z" fill="#dde0e3" stroke="#666"/></svg>
    <span>:0</span>
  </div>
</footer>
</body>
</html>
```

FILE: styles.css
```css
* { box-sizing: border-box; }
body {
  margin: 0; width: 1799px; height: 1078px; overflow: hidden;
  display: flex; flex-direction: column;
  font: 16.8px/24px "Open Sans", "Noto Sans", sans-serif;
  letter-spacing: .3px;
  color: #444; background: #eee; white-space: nowrap;
}
svg { display: block; flex: none; }
.defs { position: absolute; width: 0; height: 0; }
.ic { width: 24px; height: 24px; fill: none; stroke: #4b5461; stroke-width: 1.5; }
.caret { width: 8px; height: 8px; color: #444; }
.x { width: 16px; height: 16px; }
.chev { width: 12px; height: 8px; color: #666; }

/* title bar */
.titlebar { height: 44px; flex: none; background: #ccc; display: flex; align-items: flex-start; padding-left: 9px; }
.logo { width: 21px; height: 28px; margin-top: 5px; }
.panelico { width: 21px; height: 23px; margin: 8px 0 0 15px; }
.doc { margin: 3px 0 0 1014px; width: 144px; letter-spacing: .1px; }
.backtri { width: 7px; height: 12px; margin: 13px 0 0 8px; }
.bino { margin: 8px 0 0 12px; }
.user { margin: 7px 0 0 12px; }
.login { margin: 8px 0 0 9px; width: 121px; color: #333; }
.c1 { margin: 15px 0 0 6px; }
.cart { margin: 8px 0 0 14px; }
.vsep { width: 1px; height: 26px; background: #bbb; margin: 6px 0 0 15px; }
.help { width: 25px; height: 25px; margin: 7px 0 0 14px; border: 2px solid #555; border-radius: 50%; background: #f5f5f5; color: #1c50c0; font-weight: 700; font-size: 18px; line-height: 21px; text-align: center; letter-spacing: 0; }
.c2 { margin: 15px 0 0 11px; }
.mount { width: 24px; height: 24px; margin: 8px 0 0 77px; }
.wbtn { height: 20px; margin-top: 9px; }
.wmin { width: 13px; margin-left: 32px; }
.wres { width: 19px; margin-left: 22px; }
.wx { width: 17px; height: 17px; margin: 11px 0 0 20px; }

/* ribbon tabs */
.tabs { height: 30px; flex: none; background: #ccc; display: grid; align-items: center; line-height: 30px; padding-left: 1px;
  grid-template-columns: 86px 133px 136px 104px 103px 122px 180px 193px 59px 132px 129px 116px 99px 114px 28px 29px 10px; }
.tabs .lat { letter-spacing: 0; }
.tabs .file { background: #2a7ab5; color: #fff; width: 70px; text-align: center; }
.more { width: 14px; height: 14px; }
.collapse { width: 24px; height: 15px; }
.caret.dark { color: #111; }

/* ribbon */
.ribbon { height: 134px; flex: none; display: flex; background: #eee; border-left: 1px solid #ddd; }
.rgroup { display: flex; flex-direction: column; }
.small { display: flex; align-items: center; gap: 10px; height: 37.5px; }
.sq { width: 17px; height: 17px; }
.g1 { width: 262px; padding: 5px 0 0 15px; border-right: 1px solid #ddd; }
.g2 { width: 265px; padding: 23px 0 0 13px; }
.big { display: flex; flex-direction: column; align-items: center; text-align: center; line-height: 24.500px; padding-top: 11px; gap: 11px; }
.big svg { width: 40px; height: 40px; }
.b1 { width: 124px; padding-left: 2px; border-right: 1px solid #ddd; }
.b2 { width: 124px; padding-right: 1px; }
.b3 { width: 101px; padding-right: 8px; border-right: 1px solid #ddd; }
.rs { width: 8px; border-right: 1px solid #ddd; }
.b4 { width: 116px; padding-right: 2px; }
.b5 { width: 155px; padding-right: 10px; border-right: 1px solid #ddd; }

/* quick access toolbar */
.qat { height: 38px; flex: none; background: #ccc; border-top: 2px solid #d4d4d4; display: grid; align-items: center; padding-left: 12px;
  grid-template-columns: 35px 36px 37px 17px 35px 20px 34px 20px 37px 9px 36px 19px 36px 35px 38px 9px 36px 17px 32px 42px 10px 36px 33px 20px 36px 72px 36px 36px 18px 36px 36px 37px 35px 36px 37px 35px 36px 18px 37px 35px 36px 37px 20px; }
.vs { width: 1px; height: 36px; background: #bcbcbc; }
.dim { opacity: .5; }
.letter { font: 700 27px/34px "Liberation Sans", sans-serif; width: 24px; text-align: center; color: #3d434b; }
.active { width: 36px; height: 34px; border: 2px solid #1a78cc; background: #9fcdf4; display: flex; align-items: center; justify-content: center; }
.active .ic { width: 26px; height: 26px; }
.menu { width: 12px; height: 12px; }
.cad { font: 700 8px "Liberation Mono", monospace; fill: #222; stroke: none; }

/* options bar */
.options { height: 39px; flex: none; }
.greenish { width: 295px; height: 36px; padding-left: 11px; background: #e4efd9; }
.combo { display: flex; align-items: center; justify-content: space-between; background: #e1e1e1; border: 1px solid #adadad; color: #1a1a1a; letter-spacing: .18px; }
.greenish .combo { width: 278px; height: 36px; padding: 0 6px 0 5px; }

/* work area */
.work { height: 756px; flex: none; display: flex; border-top: 3px solid #ccc; }
.ptitle { height: 29px; display: flex; justify-content: space-between; align-items: center; }
.props { width: 450px; border-left: 2px solid #e2e2e2; display: flex; flex-direction: column; }
.props .ptitle { padding: 0 7px 0 2px; }
.typesel { height: 107px; width: 444px; border: solid #d0d0d0; border-width: 1px 1px 0 0; display: flex; align-items: center; padding-left: 5px; letter-spacing: .2px; }
.preview { width: 98px; height: 99px; border: 1px solid #ccc; display: flex; align-items: center; justify-content: center; }
.preview svg { width: 46px; height: 48px; }
.tname { margin-left: 7px; width: 320px; }
.tcaret { width: 12px; height: 10px; color: #333; }
.instance { height: 34px; display: flex; align-items: center; color: #222; }
.instance .combo { width: 286px; height: 33px; padding: 0 6px 0 5px; }
.edit { width: 20px; height: 20px; margin: -4px 5px 0 7px; }
.instance span { margin-top: -4px; letter-spacing: .15px; }
.gridwrap { height: 544px; display: flex; gap: 1px; }
.grid { width: 419px; height: 544px; overflow: hidden; background: #fff; color: #1a1a1a; }
.ghead { height: 29px; background: #dcdcdc; padding: 0 7px 2px 3px; display: flex; align-items: center; justify-content: space-between; }
.ghead svg { width: 8px; height: 11px; margin-top: -6px; }
.pr { height: 28.84px; display: grid; grid-template-columns: 201px 199px 19px; line-height: 26px; }
.pr > * { border: dotted #888; border-width: 0 1px 1px 0; }
.pr span { padding-left: 3px; }
.pr span:first-child { padding-left: 12px; letter-spacing: .22px; }
.pr.tight span:first-child { letter-spacing: .06px; }
.pr.off { color: #888; }
.pr.off span { letter-spacing: .08px; }
.pr .edt { border: 1.500px solid #222; padding-left: 6px; margin: 0 0 1px 1px; line-height: 23px; letter-spacing: 0; }
.pr button { font: inherit; letter-spacing: 0; color: #222; line-height: 22px; background: #e1e1e1; border: solid #b4b4b4; border-width: 1px 2px 3px 1px; margin: 2px 0 1px 2px; padding: 0 2px 0 0; }
.check { display: block; width: 19px; height: 19px; border: 1.500px solid #333; margin: 4px 0 0 1px; }
.vscroll { width: 23px; background: #f0f0f0; display: flex; flex-direction: column; align-items: center; }
.vscroll svg, .vbar .left, .vbar .right, .hscroll svg { width: 12px; height: 8px; }
.thumb { background: #cdcdcd; }
.vscroll .thumb { width: 23px; }
.down { transform: rotate(180deg); margin-top: auto; }
.left { transform: rotate(-90deg); }
.right { transform: rotate(90deg); }
.pv { padding: 9px 0; }
.pv .thumb { height: 201px; margin-top: 9px; }
.pfoot { height: 39px; padding: 2px 6px 0 2px; display: flex; justify-content: space-between; }
.pfoot a { color: #1a6fd0; text-decoration: underline; line-height: 34px; }
.apply { width: 104px; height: 32px; background: #ccc; border: 1px solid #c2c2c2; color: #888; text-align: center; line-height: 31px; letter-spacing: .1px; }

/* project browser */
.browser { width: 455px; border: solid #ccc; border-width: 0 2px 0 2px; padding-left: 2px; }
.browser .ptitle { padding: 0 8px 0 3px; letter-spacing: .15px; }
.treewrap { display: flex; height: 698px; }
.tree { position: relative; width: 422px; height: 698px; overflow: hidden; background: #fff; padding-top: 1.200px; color: #1a1a1a; }
.guides { position: absolute; left: 0; top: 0; width: 422px; height: 698px; fill: none; stroke: #999; stroke-dasharray: 1 1.200; }
.tr { position: relative; height: 26.400px; line-height: 26.400px; display: flex; align-items: center; }
.tr b { width: 16px; height: 16px; flex: none; border: 1px solid #8e8e8e; border-radius: 1px;
  background: linear-gradient(#2d5596, #2d5596) center/10px 1.500px no-repeat, linear-gradient(#2d5596, #2d5596) center/1.500px 10px no-repeat, linear-gradient(#fff, #ddd); }
.tr b.m { background: linear-gradient(#2d5596, #2d5596) center/10px 1.500px no-repeat, linear-gradient(#fff, #ddd); }
.l1 b::after, .l2 b::after { content: ""; display: block; width: 14px; border-top: 1px dotted #999; margin: 6.500px 0 0 16px; }
.l0 { padding-left: 5px; }
.fam { width: 22px; height: 22px; margin: 0 8px 0 12px; }
.l1 { padding-left: 36.500px; }
.l2 { padding-left: 67.500px; }
.l1 b, .l2 b { margin-right: 17.500px; }
.l3 { padding-left: 129px; letter-spacing: .15px; }
.l3 span { padding-left: 4px; }
.l3 .sel { background: #e1e1e1; width: 292px; overflow: hidden; flex: none; letter-spacing: .3px; }
.bv { padding: 8px 0 8px; }
.bv .thumb { height: 307px; margin-top: 56px; }
.hscroll { height: 26px; display: flex; align-items: center; padding: 0 0 3px 6px; }
.hscroll .thumb { width: 357px; height: 23px; margin: 0 20px 0 8px; }

/* view window */
.views { width: 894px; display: flex; flex-direction: column; background: #fff; }
.vtabs { height: 30px; background: #ccc; display: flex; align-items: center; letter-spacing: 0; }
.vt { height: 30px; display: flex; align-items: center; }
.vt.pink { width: 191px; background: #f8dada; padding-left: 6px; margin-right: 1px; }
.vt.cur { width: 194px; background: #9ccff8; padding-left: 7px; font-weight: 700; color: #111; }
.vt.last { width: 190px; background: #9ccff8; padding-left: 4px; }
.vico { width: 24px; height: 22px; }
.faded { opacity: .65; }
.vt span { margin-left: 11px; }
.vt.cur span { width: 60px; }
.vt .x { margin-left: 67px; width: 15px; height: 15px; }
.vtabs .menu { margin-left: 302px; }
.canvasrow { height: 649px; display: flex; padding: 3px 0 0 2px; gap: 1px; }
.plan { width: 868px; height: 646px; letter-spacing: 0; }
.ptext { font: 84px "Liberation Sans", Arial, sans-serif; }
.two { font: 700 12px "Liberation Sans", sans-serif; fill: #7ca3c8; }
.cv { padding: 7px 0 9px; }
.cv .thumb { height: 25px; margin-top: 295px; }
.vbar { height: 27px; background: #f0f0f0; border-bottom: 1px solid #ddd; margin-left: 2px; display: grid; align-items: center;
  grid-template-columns: 110px 30px 29px 31px 29px 30px 30px 29px 30px 30px 30px 34px 198px 209px 27px 14px; }
.vbar .ic { height: 22px; }
.scale { padding-left: 32px; color: #222; font-size: 16px; letter-spacing: .1px; }
.vbar .thumb { width: 25px; height: 23px; }
.grip { width: 14px; height: 14px; margin-top: 6px; }
.cmd { height: 40px; margin: 4px 1px 0 2px; border: 1px solid #ccc; border-width: 2px 1px 1px 1px; padding: 0 10px 2px 8px; display: flex; align-items: center; justify-content: space-between; color: #888; letter-spacing: .2px; }
.cmd .caret { width: 11px; height: 9px; color: #bbb; }

/* status bar */
.status { height: 37px; flex: none; background: #ccc; display: flex; align-items: center; padding: 4px 0 0 2px; color: #222; }
.hint { width: 175px; letter-spacing: .35px; }
.sbox { height: 28px; background: #fff; border: 1px solid #ddd; display: flex; align-items: center; justify-content: flex-end; padding: 0 4px; color: #888; letter-spacing: .1px; }
.sbox .chev { color: #999; }
.s1 { width: 305px; margin-left: 10px; }
.brush { width: 22px; height: 24px; margin-left: 11px; }
.zero { width: 39px; padding-left: 7px; }
.list { width: 24px; height: 24px; margin-left: 7px; }
.link { width: 24px; height: 24px; margin-left: 12px; }
.s2 { width: 306px; margin-left: 9px; justify-content: space-between; }
.sel-icons { display: flex; align-items: center; gap: 12.100px; margin-left: 498px; }
.sel-icons span { margin-left: -13px; letter-spacing: 0; }
```
